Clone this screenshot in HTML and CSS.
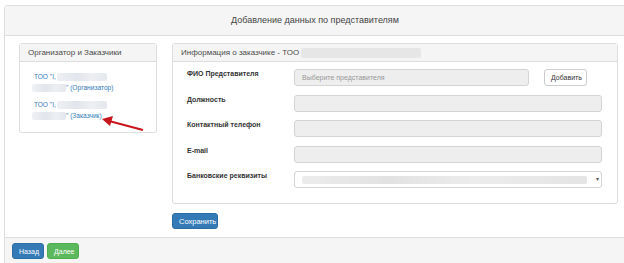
FILE: index.html
```html
<!DOCTYPE html>
<html lang="ru">
<head>
<meta charset="UTF-8">
<title>Добавление данных по представителям</title>
<link rel="stylesheet" href="styles.css">
</head>
<body>

<div class="page">
    <div class="page-head">Добавление данных по представителям</div>

    <div class="page-body">
        <div class="panel side">
            <div class="panel-head">Организатор и Заказчики</div>
            <div class="side-body">
                <a class="org">ТОО "І,<span class="blur b1"></span><br><span class="blur b2"></span>" (Организатор)</a>
                <a class="org">ТОО "І,<span class="blur b1"></span><br><span class="blur b2"></span>" (Заказчик)</a>
            </div>
        </div>

        <div class="main">
            <div class="panel info">
                <div class="panel-head">Информация о заказчике - ТОО <span class="blur b3"></span></div>
                <div class="form">
                    <div class="row">
                        <label>ФИО Представителя</label>
                        <div class="field short">Выберите представителя</div>
                        <button class="btn btn-default">Добавить</button>
                    </div>
                    <div class="row">
                        <label>Должность</label>
                        <div class="field"></div>
                    </div>
                    <div class="row">
                        <label>Контактный телефон</label>
                        <div class="field"></div>
                    </div>
                    <div class="row">
                        <label>E-mail</label>
                        <div class="field"></div>
                    </div>
                    <div class="row">
                        <label>Банковские реквизиты</label>
                        <div class="field select"><span class="blur b4"></span><span class="caret">▾</span></div>
                    </div>
                </div>
            </div>
            <button class="btn btn-primary save">Сохранить</button>
        </div>
    </div>

    <div class="page-foot">
        <button class="btn btn-primary">Назад</button>
        <button class="btn btn-success">Далее</button>
    </div>

    <svg class="arrow" width="44" height="16" viewBox="0 0 44 16">
        <line x1="42" y1="14" x2="8" y2="5" stroke="#c8161d" stroke-width="2.2"/>
        <polygon points="1,3 12,0 9,10" fill="#c8161d"/>
    </svg>
</div>

</body>
</html>
```

FILE: styles.css
```css
body {
    margin: 0;
    background: #fff;
    font-family: "Liberation Sans", Arial, sans-serif;
    color: #333;
}

.page {
    position: relative;
    margin: 5px -2px 0 4px;
    border: 1px solid #ddd;
    border-radius: 3px;
}

.page-head {
    height: 29px;
    line-height: 29px;
    background: #f5f5f5;
    border-bottom: 1px solid #ddd;
    text-align: center;
    font-size: 9px;
    color: #444;
}

.page-body {
    display: flex;
    gap: 15px;
    height: 194px;
    padding: 7px 0 0 14px;
}

.panel {
    border: 1px solid #ddd;
    border-radius: 3px;
    background: #fff;
}

.panel-head {
    height: 17px;
    line-height: 17px;
    background: #f5f5f5;
    border-bottom: 1px solid #ddd;
    padding-left: 8px;
    font-size: 8px;
    color: #4a4a4a;
}

.side {
    width: 136px;
    height: 88px;
}

.side-body {
    padding: 9px 0 0 14px;
}

.org {
    display: block;
    color: #337ab7;
    font-size: 6.6px;
    line-height: 11px;
    margin-bottom: 6px;
}

.blur {
    display: inline-block;
    vertical-align: middle;
    border-radius: 2px;
    background: linear-gradient(90deg, #eef0f4, #e2e5eb 40%, #edeff3 70%, #e4e7ec);
}

.b1 { width: 50px; height: 8px; margin-left: 1px; }
.b2 { width: 34px; height: 8px; margin-left: -2px; }
.b3 { width: 120px; height: 10px; background: #e6e6e6; }
.b4 { width: 285px; height: 8px; background: linear-gradient(90deg, #ececec, #e2e2e2 30%, #ececec 60%, #e4e4e4); }

.main {
    width: 446px;
}

.info {
    height: 159px;
}

.form {
    padding: 7px 15px 0 14px;
}

.row {
    display: flex;
    align-items: flex-start;
    height: 17px;
    margin-bottom: 8.5px;
}

.row label {
    width: 107px;
    flex-shrink: 0;
    padding-top: 1px;
    font-size: 7px;
    font-weight: bold;
}

.field {
    box-sizing: border-box;
    flex: 1;
    height: 17px;
    line-height: 15px;
    border: 1px solid #d4d4d4;
    border-radius: 3px;
    background: #eee;
    padding-left: 7px;
    font-size: 7px;
    color: #999;
}

.field.short {
    flex: 0 0 235px;
    margin-right: 15px;
}

.field.select {
    display: flex;
    align-items: center;
    background: #fff;
    padding-left: 7px;
}

.caret {
    margin-left: 9px;
    font-size: 6px;
    color: #555;
}

.btn {
    box-sizing: border-box;
    height: 16px;
    padding: 0 6px;
    border: 1px solid transparent;
    border-radius: 3px;
    font-family: inherit;
    font-size: 7px;
    cursor: pointer;
}

.btn-default {
    height: 17px;
    width: 43px;
    background: #fff;
    border-color: #ccc;
    color: #333;
}

.btn-primary {
    background: #337ab7;
    border-color: #2e6da4;
    color: #fff;
}

.btn-success {
    background: #5cb85c;
    border-color: #4cae4c;
    color: #fff;
}

.save {
    margin-top: 9px;
    width: 46px;
    font-size: 7.5px;
}

.page-foot {
    display: flex;
    gap: 3px;
    height: 30px;
    background: #f5f5f5;
    border-top: 1px solid #ddd;
    padding: 5px 0 0 7px;
    box-sizing: border-box;
}

.page-foot .btn {
    width: 32px;
    height: 16px;
}

.arrow {
    position: absolute;
    left: 96px;
    top: 110px;
}
```
